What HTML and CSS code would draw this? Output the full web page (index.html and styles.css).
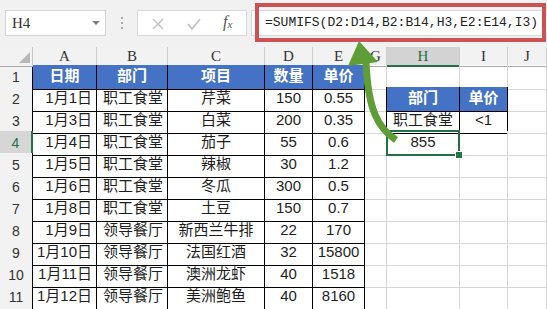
FILE: index.html
```html
<!DOCTYPE html>
<html>
	<head>
		<meta charset="UTF-8">
		<title>SUMIFS</title>
		<link rel="stylesheet" href="styles.css">
	</head>
	<body>
		<div class="sheet">
			<div class="bar">
				<div class="namebox">H4<span class="drop"></span></div>
				<div class="dots"><i></i><i></i><i></i></div>
				<div class="btns">
					<svg width="110" height="24" viewBox="0 0 110 24">
						<path d="M15 7 L25 17 M25 7 L15 17" stroke="#c4c4c4" stroke-width="1.6" fill="none"/>
						<path d="M50 12 L54 17 L62 7" stroke="#c4c4c4" stroke-width="1.8" fill="none"/>
					</svg>
					<span class="fx">f<sub>x</sub></span>
				</div>
				<div class="formula">=SUMIFS(D2:D14,B2:B14,H3,E2:E14,I3)</div>
			</div>

			<div class="row head">
				<div class="corner"></div>
				<div class="ch">A</div><div class="ch">B</div><div class="ch">C</div><div class="ch">D</div><div class="ch">E</div>
				<div class="ch">G</div><div class="ch on">H</div><div class="ch">I</div><div class="ch">J</div>
			</div>

			<div class="row">
				<div class="rh">1</div>
				<div class="c k hd">日期</div><div class="c k hd">部门</div><div class="c k hd">项目</div><div class="c k hd">数量</div><div class="c k hd">单价</div>
				<div class="c"></div><div class="c kb"></div><div class="c kb"></div><div class="c"></div>
			</div>
			<div class="row">
				<div class="rh">2</div>
				<div class="c k r">1月1日</div><div class="c k l">职工食堂</div><div class="c k">芹菜</div><div class="c k">150</div><div class="c k">0.55</div>
				<div class="c kr"></div><div class="c k hd">部门</div><div class="c k hd">单价</div><div class="c"></div>
			</div>
			<div class="row">
				<div class="rh">3</div>
				<div class="c k r">1月3日</div><div class="c k l">职工食堂</div><div class="c k">白菜</div><div class="c k">200</div><div class="c k">0.35</div>
				<div class="c kr"></div><div class="c k">职工食堂</div><div class="c k">&lt;1</div><div class="c"></div>
			</div>
			<div class="row">
				<div class="rh on">4</div>
				<div class="c k r">1月4日</div><div class="c k l">职工食堂</div><div class="c k">茄子</div><div class="c k">55</div><div class="c k">0.6</div>
				<div class="c"></div><div class="c act">855</div><div class="c"></div><div class="c"></div>
			</div>
			<div class="row">
				<div class="rh">5</div>
				<div class="c k r">1月5日</div><div class="c k l">职工食堂</div><div class="c k">辣椒</div><div class="c k">30</div><div class="c k">1.2</div>
				<div class="c"></div><div class="c"></div><div class="c"></div><div class="c"></div>
			</div>
			<div class="row">
				<div class="rh">6</div>
				<div class="c k r">1月6日</div><div class="c k l">职工食堂</div><div class="c k">冬瓜</div><div class="c k">300</div><div class="c k">0.5</div>
				<div class="c"></div><div class="c"></div><div class="c"></div><div class="c"></div>
			</div>
			<div class="row">
				<div class="rh">7</div>
				<div class="c k r">1月8日</div><div class="c k l">职工食堂</div><div class="c k">土豆</div><div class="c k">150</div><div class="c k">0.7</div>
				<div class="c"></div><div class="c"></div><div class="c"></div><div class="c"></div>
			</div>
			<div class="row">
				<div class="rh">8</div>
				<div class="c k r">1月9日</div><div class="c k l">领导餐厅</div><div class="c k">新西兰牛排</div><div class="c k">22</div><div class="c k">170</div>
				<div class="c"></div><div class="c"></div><div class="c"></div><div class="c"></div>
			</div>
			<div class="row">
				<div class="rh">9</div>
				<div class="c k r">1月10日</div><div class="c k l">领导餐厅</div><div class="c k">法国红酒</div><div class="c k">32</div><div class="c k">15800</div>
				<div class="c"></div><div class="c"></div><div class="c"></div><div class="c"></div>
			</div>
			<div class="row">
				<div class="rh">10</div>
				<div class="c k r">1月11日</div><div class="c k l">领导餐厅</div><div class="c k">澳洲龙虾</div><div class="c k">40</div><div class="c k">1518</div>
				<div class="c"></div><div class="c"></div><div class="c"></div><div class="c"></div>
			</div>
			<div class="row">
				<div class="rh">11</div>
				<div class="c k r">1月12日</div><div class="c k l">领导餐厅</div><div class="c k">美洲鲍鱼</div><div class="c k">40</div><div class="c k">8160</div>
				<div class="c"></div><div class="c"></div><div class="c"></div><div class="c"></div>
			</div>

			<!-- annotation on top of the screenshot -->
			<div class="mark"></div>
			<svg class="arrow" width="547" height="309" viewBox="0 0 547 309">
				<path d="M396 140 C378 128, 368 110, 366 62" stroke="#5f9e37" stroke-width="7" fill="none"/>
				<polygon points="359,41 348,66 378,62" fill="#5f9e37"/>
			</svg>
		</div>
	</body>
</html>
```

FILE: styles.css
```css
body{margin:0;background:#fff;}
.sheet{width:547px;height:309px;overflow:hidden;position:relative;
	font-family:"Liberation Sans","Noto Sans CJK SC",sans-serif;color:#1e1e1e;}

.bar{height:47px;background:#f1f1f1;display:flex;align-items:flex-start;padding-top:10px;box-sizing:border-box;}
.namebox{width:101px;height:26px;margin-left:5px;box-sizing:border-box;background:#fff;border:1px solid #d2d2d2;
	font:15px/24px "Liberation Serif",serif;color:#333;padding-left:6px;position:relative;}
.drop{position:absolute;right:5px;top:10px;border-left:4px solid transparent;border-right:4px solid transparent;border-top:4px solid #808080;}
.dots{width:31px;height:26px;display:flex;flex-direction:column;align-items:center;justify-content:center;gap:3px;}
.dots i{width:2px;height:2px;background:#a8a8a8;}
.btns{width:110px;height:26px;box-sizing:border-box;background:#fff;border:1px solid #d9d9d9;position:relative;}
.btns svg{display:block;margin-top:1px;}
.fx{position:absolute;left:85px;top:2px;font:italic 16px "Liberation Serif",serif;color:#555;}
.fx sub{font-size:11px;vertical-align:-1px;}
.formula{flex:1;margin-left:4px;height:26px;background:#fff;border:1px solid #d9d9d9;border-right:0;box-sizing:border-box;
	font:13px/24px "Liberation Mono",monospace;color:#222;padding-left:13px;white-space:nowrap;}

.row{display:grid;grid-template-columns:33px 64px 71px 97px 48px 52px 22px 73px 48px 39px;height:22px;}
.row.head{height:18px;background:#f2f2f2;}
.corner{border-right:1px solid #c9c9c9;border-bottom:1px solid #ababab;position:relative;}
.corner:after{content:"";position:absolute;right:2px;bottom:3px;border-left:11px solid transparent;border-bottom:11px solid #b8b8b8;}
.ch{border-right:1px solid #cfcfcf;border-bottom:1px solid #ababab;text-align:center;
	font:15px/18px "Liberation Serif",serif;color:#333;}
.ch.on{background:#d3d3d3;color:#1f6e43;border-bottom:2px solid #217346;}

.rh{background:#f2f2f2;border-right:1px solid #000;border-bottom:1px solid #d0d0d0;text-align:center;
	font-size:14px;line-height:24px;color:#333;}
.rh.on{background:#d6d6d6;color:#217346;border-right:2px solid #217346;}

.c{border-right:1px solid #d6d6d6;border-bottom:1px solid #d6d6d6;box-sizing:border-box;
	font-size:15px;line-height:21px;text-align:center;white-space:nowrap;overflow:hidden;padding:0 3px;}
.c.k{border-right-color:#000;border-bottom-color:#000;}
.c.kr{border-right-color:#000;}
.c.kb{border-bottom-color:#000;}
.c.l{text-align:left;padding-left:6px;}
.c.r{text-align:right;padding-right:4px;}
.c.hd{background:#4472c4;color:#fff;font-weight:bold;}
.c.act{position:relative;overflow:visible;}
.c.act:before{content:"";position:absolute;left:-1px;top:-1px;right:-1px;bottom:-1px;border:2px solid #217346;}
.c.act:after{content:"";position:absolute;right:-4px;bottom:-4px;width:6px;height:6px;background:#217346;border:1px solid #fff;}

.mark{position:absolute;left:255px;top:3px;width:291px;height:39px;box-sizing:border-box;border:4px solid #cc5253;}
.arrow{position:absolute;left:0;top:0;}
```
